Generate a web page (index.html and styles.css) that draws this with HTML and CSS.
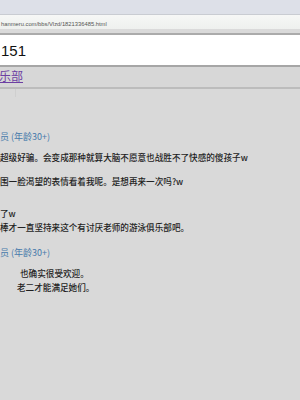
FILE: index.html
```html
<!DOCTYPE html>
<html lang="zh-CN">
<head>
  <meta charset="UTF-8">
  <meta name="viewport" content="width=device-width, initial-scale=1.0">
  <title>1821336485</title>
  <link rel="stylesheet" href="styles.css">
</head>
<body>
  <div class="browser-top"></div>
  <div class="url-bar">hanmeru.com/bbs/Vlzd/1821336485.html</div>
  <div class="tool-strip"></div>

  <div class="thread-title">151</div>

  <div class="crumbs">
    <a href="#" class="crumb-link">乐部</a>
    <span class="crumb-mark"></span>
  </div>

  <div class="posts">
    <div class="post">
      <div class="post-head">员 (年龄30+)</div>
      <p class="post-line">超级好骗。会变成那种就算大脑不愿意也战胜不了快感的傻孩子w</p>
      <p class="post-line gap">围一脸渴望的表情看着我呢。是想再来一次吗?w</p>
      <p class="post-line gap-big">了w</p>
      <p class="post-line">棒才一直坚持来这个有讨厌老师的游泳俱乐部吧。</p>
    </div>

    <div class="post">
      <div class="post-head">员 (年龄30+)</div>
      <p class="post-line indent">也确实很受欢迎。</p>
      <p class="post-line indent-sm">老二才能满足她们。</p>
    </div>
  </div>
</body>
</html>
```

FILE: styles.css
```css
body {
  margin: 0;
  width: 300px;
  height: 400px;
  overflow: hidden;
  background: #d9d9d9;
  font-family: "Noto Sans CJK SC", "Noto Sans", sans-serif;
  color: #1e1e1e;
}
.browser-top {
  height: 14px;
  background: #dde0e8;
}
.url-bar {
  height: 14px;
  padding-left: 1px;
  background: linear-gradient(#f6f7f6, #eef0ee);
  border-top: 1px solid #c9ccd2;
  font-family: "Liberation Sans", Arial, sans-serif;
  font-size: 5.8px;
  line-height: 18px;
  color: #555;
  white-space: nowrap;
  overflow: hidden;
}
.tool-strip {
  height: 4px;
  background: #dadada;
  border-bottom: 2px solid #ababab;
}
.thread-title {
  height: 30px;
  padding-left: 1px;
  background: #fff;
  border-bottom: 2px solid #a6a6a6;
  font-family: "Liberation Sans", Arial, sans-serif;
  font-size: 15px;
  line-height: 32px;
  color: #111;
}
.crumbs {
  position: relative;
  height: 20px;
  background: #d7d7d7;
  border-bottom: 2px solid #bcbcbc;
  font-size: 12px;
  line-height: 17px;
  white-space: nowrap;
}
.crumb-link {
  margin-left: -1px;
  color: #6d3fa3;
}
.crumb-mark {
  position: absolute;
  left: 15px;
  top: 22px;
  width: 1px;
  height: 8px;
  background: #cfcfcf;
}
.posts {
  padding-top: 41px;
}
.post {
  margin-bottom: 12px;
}
.post-head {
  font-size: 9px;
  line-height: 14px;
  color: #467aab;
  white-space: nowrap;
}
.post-line {
  margin: 0;
  font-size: 8.6px;
  font-weight: 500;
  line-height: 14px;
  white-space: nowrap;
}
.post-head + .post-line {
  margin-top: 6px;
}
.gap {
  margin-top: 10px;
}
.gap-big {
  margin-top: 18px;
}
.indent {
  margin-left: 20px;
}
.indent-sm {
  margin-left: 17px;
}
```
